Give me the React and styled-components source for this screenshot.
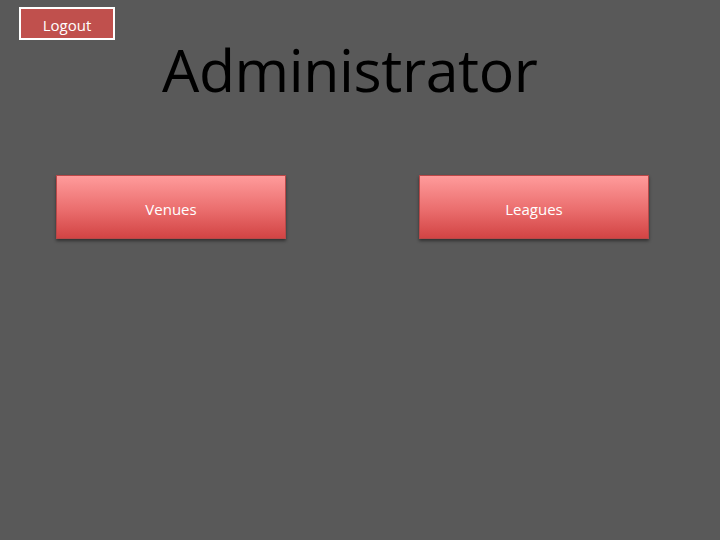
import React from "react";
import styled, { createGlobalStyle } from "styled-components";

const Global = createGlobalStyle`
  html, body {
    margin: 0;
    padding: 0;
    background: #595959;
    font-family: "Open Sans", "Liberation Sans", sans-serif;
  }
`;

const Page = styled.div`
  width: 720px;
  height: 540px;
  background: #595959;
  box-sizing: border-box;
  padding: 7px 0 0 19px;
`;

const LogoutButton = styled.button`
  display: block;
  width: 96px;
  height: 33px;
  box-sizing: border-box;
  border: 2px solid #ffffff;
  background: #c0504d;
  color: #ffffff;
  font-family: "Open Sans", "Liberation Sans", sans-serif;
  font-size: 15px;
  padding: 2px 0 0;
  cursor: pointer;
`;

const Title = styled.h1`
  margin: -7px 0 0 143px;
  font-family: "Open Sans", "Liberation Sans", sans-serif;
  font-weight: 400;
  font-size: 59px;
  line-height: 72px;
  color: #000000;
  letter-spacing: -0.4px;
`;

const Menu = styled.div`
  display: flex;
  gap: 133px;
  margin: 70px 0 0 37px;
`;

const MenuButton = styled.button`
  width: 230px;
  height: 64px;
  box-sizing: border-box;
  border: 1px solid #b94848;
  background: linear-gradient(to bottom, #ff9b9b 0%, #ea6d6d 55%, #d24444 100%);
  box-shadow: 0 2px 3px rgba(0, 0, 0, 0.45);
  color: #ffffff;
  font-family: "Open Sans", "Liberation Sans", sans-serif;
  font-size: 15px;
  padding: 4px 0 0;
  cursor: pointer;
`;

export default function App() {
  return (
    <Page>
      <Global />
      <LogoutButton>Logout</LogoutButton>
      <Title>Administrator</Title>
      <Menu>
        <MenuButton>Venues</MenuButton>
        <MenuButton>Leagues</MenuButton>
      </Menu>
    </Page>
  );
}
